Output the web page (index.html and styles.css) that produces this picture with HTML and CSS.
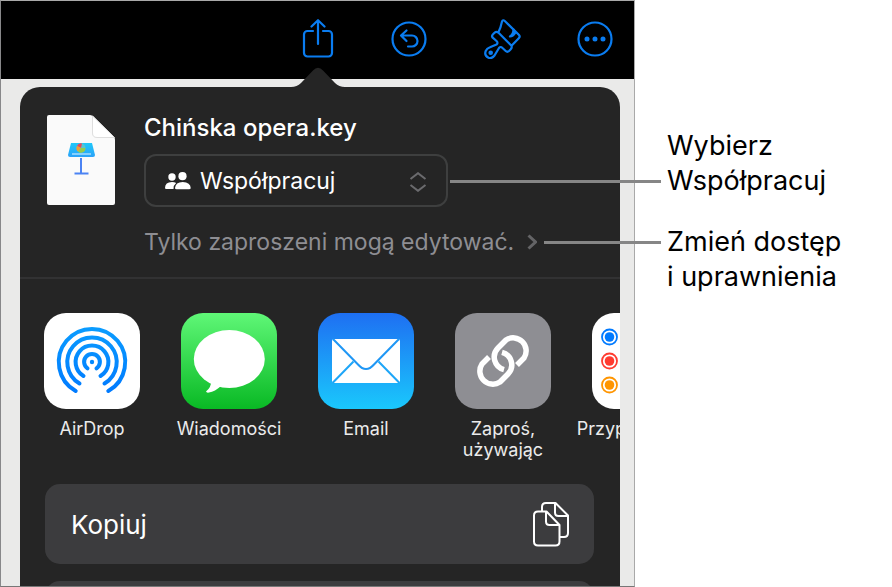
FILE: index.html
```html
<!DOCTYPE html>
<html lang="pl">
<head>
    <meta charset="UTF-8">
    <meta name="viewport" content="width=device-width, initial-scale=1.0">
    <title>Współpracuj</title>
    <link rel="stylesheet" href="styles.css">
</head>
<body>
    <div class="device">
        <!-- Pasek narzędzi -->
        <div class="toolbar">
            <button class="share" aria-label="Udostępnij">
                <svg width="36" height="40" viewBox="0 0 36 40">
                    <path d="M13 12H7.500a3.500 3.500 0 0 0-3.500 3.500V34a3.500 3.500 0 0 0 3.500 3.500H28.500a3.500 3.500 0 0 0 3.500-3.500V15.500a3.500 3.500 0 0 0-3.500-3.500H23M18 25V1.500M11.500 7.500L18 1.200L24.500 7.500"/>
                </svg>
            </button>
            <button aria-label="Cofnij">
                <svg width="40" height="40" viewBox="0 0 40 40">
                    <circle cx="20" cy="20" r="16.500"/>
                    <path d="M17.500 11.500L12 16.500L17.500 22M12.500 16.500H23a5.500 5.500 0 0 1 0 11H19"/>
                </svg>
            </button>
            <button aria-label="Format">
                <svg width="40" height="40" viewBox="0 0 40 40">
                    <path d="M20 2.500Q21 0.300 22.800 2L36.800 15.700Q38.500 17.500 36.800 19.300L29.500 26.800Q30.300 28.500 28.500 30.500L27 32Q25.300 33.500 23.700 32L20.500 29Q18.500 27 17 29L12.500 36.500Q10 40 6.500 38.800Q2 36.500 3.700 32Q4.800 29.500 8 28.300L14.500 25.500Q16.500 24 14.500 22L10.700 18.700Q9.300 17 10.800 15.500L12.500 13.800Q14.300 12 16.300 13.500Q18.700 9 20 2.500ZM16.300 13.500L29.500 26.800"/>
                    <path class="solid" d="M31.500 10.500Q31.500 15 28 17.500Q31 17.500 33.500 13.500Z"/>
                    <circle class="solid" cx="8.700" cy="33.800" r="1.200"/>
                </svg>
            </button>
            <button aria-label="Więcej">
                <svg width="40" height="40" viewBox="0 0 40 40">
                    <circle cx="20" cy="20" r="16.500"/>
                    <g class="solid">
                        <circle cx="12" cy="20" r="1.400"/>
                        <circle cx="20" cy="20" r="1.400"/>
                        <circle cx="28" cy="20" r="1.400"/>
                    </g>
                </svg>
            </button>
        </div>

        <!-- Arkusz udostępniania -->
        <div class="sheet">
            <svg class="arrow" width="54" height="21" viewBox="0 0 54 21">
                <path d="M0 21V20Q6 20 10 16L22 3.500Q27-2 32 3.500L44 16Q48 20 54 20V21Z"/>
            </svg>

            <div class="file">
                <svg class="thumb" width="68" height="90" viewBox="0 0 68 90">
                    <defs>
                        <linearGradient id="podium" x1="0" y1="0" x2="0" y2="1">
                            <stop offset="0" stop-color="#1fc8fa"/>
                            <stop offset="1" stop-color="#2ba2f8"/>
                        </linearGradient>
                    </defs>
                    <path d="M2 0H43Q45 0 46.500 1.500L67 22Q68 23 68 25V88Q68 90 66 90H2Q0 90 0 88V2Q0 0 2 0Z" fill="#fafafa"/>
                    <path d="M45.500 1V18Q45.500 22.500 50 22.500H67.500Z" fill="#fff" stroke="#dedede"/>
                    <path d="M24 28H45L48 40Q48 42 46 42H23Q21 42 21 40Z" fill="url(#podium)"/>
                    <path d="M25 39H44" stroke="#a5dcff" stroke-width="1.500"/>
                    <circle cx="34" cy="33" r="4.500" fill="#58c6cf"/>
                    <path d="M34 33L30 31A4.500 4.500 0 0 1 35 28.500Z" fill="#e8485c"/>
                    <path d="M34 33L31 36.500A4.500 4.500 0 0 1 30 31Z" fill="#f39b35"/>
                    <path d="M34 33H38.500A4.500 4.500 0 0 1 31 36.500Z" fill="#95cb4b"/>
                    <path d="M34 43V58M27.500 58.500H41.500" stroke="#4b83f3" stroke-width="2"/>
                </svg>
                <div class="details">
                    <h1>Chińska opera.key</h1>
                    <div class="mode">
                        <svg class="people" width="26" height="18" viewBox="0 0 26 18">
                            <circle cx="7" cy="5" r="3.700"/>
                            <circle cx="17.500" cy="4.200" r="4.100"/>
                            <path d="M0 16Q0 10 7 10Q9.500 10 11.200 11Q8.500 13 8.500 17H1.200Q0 17 0 16ZM10 16Q10.500 10 17.700 10Q25.500 10.300 25.700 16Q25.700 17.300 24 17.300H11.500Q10 17.300 10 16Z"/>
                        </svg>
                        <select aria-label="Sposób udostępniania">
                            <option>Współpracuj</option>
                            <option>Wyślij kopię</option>
                        </select>
                        <svg class="updown" width="18" height="20" viewBox="0 0 18 20">
                            <path d="M1.500 7L9 1.200L16.500 7M1.500 13L9 18.800L16.500 13"/>
                        </svg>
                    </div>
                    <a class="access" href="#">Tylko zaproszeni mogą edytować.
                        <svg width="10" height="16" viewBox="0 0 10 16"><path d="M1.500 1.500L8.500 8L1.500 14.500"/></svg>
                    </a>
                </div>
            </div>

            <div class="apps">
                <a class="app" href="#">
                    <svg width="96" height="96" viewBox="0 0 96 96">
                        <defs>
                            <linearGradient id="air" gradientUnits="userSpaceOnUse" x1="0" y1="14" x2="0" y2="80">
                                <stop offset="0" stop-color="#0a9cff"/>
                                <stop offset="1" stop-color="#007aff"/>
                            </linearGradient>
                        </defs>
                        <rect width="96" height="96" rx="22" fill="#fff"/>
                        <g fill="none" stroke="url(#air)" stroke-width="4" stroke-linecap="round">
                            <path d="M31.700 78A33.200 33.200 0 1 1 64.300 78"/>
                            <path d="M35.500 70.500A24.700 24.700 0 1 1 60.500 70.500"/>
                            <path d="M39.500 63A16.400 16.400 0 1 1 56.500 63"/>
                            <path d="M43.500 55.300A7.900 7.900 0 1 1 52.500 55.300"/>
                        </g>
                        <circle cx="48" cy="49" r="2.200" fill="#0089ff"/>
                    </svg>
                    <span>AirDrop</span>
                </a>
                <a class="app" href="#">
                    <svg width="96" height="96" viewBox="0 0 96 96">
                        <defs>
                            <linearGradient id="green" x1="0" y1="0" x2="0" y2="1">
                                <stop offset="0" stop-color="#5ff777"/>
                                <stop offset="1" stop-color="#09b924"/>
                            </linearGradient>
                        </defs>
                        <rect width="96" height="96" rx="22" fill="url(#green)"/>
                        <ellipse cx="48.300" cy="46" rx="35.500" ry="29" fill="#fff"/>
                        <path d="M30 68Q30.500 74 25 78.500Q25.500 80 28 79.500Q34 78.500 40 73Z" fill="#fff"/>
                    </svg>
                    <span>Wiadomości</span>
                </a>
                <a class="app" href="#">
                    <svg width="96" height="96" viewBox="0 0 96 96">
                        <defs>
                            <linearGradient id="blue" x1="0" y1="0" x2="0" y2="1">
                                <stop offset="0" stop-color="#1e6ff2"/>
                                <stop offset="1" stop-color="#1ac8fc"/>
                            </linearGradient>
                        </defs>
                        <rect width="96" height="96" rx="22" fill="url(#blue)"/>
                        <rect x="14" y="26" width="68" height="44" rx="2" fill="#fff"/>
                        <path d="M15 26L40 51.500Q48 60.500 56 51.500L81 26" fill="none" stroke="#1f97f5" stroke-width="2"/>
                        <path d="M14.500 70L35.500 48.500M81.500 70L60.500 48.500" stroke="#1ea6f8" stroke-width="2"/>
                    </svg>
                    <span>Email</span>
                </a>
                <a class="app" href="#">
                    <svg width="96" height="96" viewBox="0 0 96 96">
                        <rect width="96" height="96" rx="22" fill="#8e8e93"/>
                        <g fill="none" stroke="#fff" stroke-width="5.500">
                            <path d="M62 52L69 45A13 13 0 0 0 51 27L43 35A13 13 0 0 0 49 56.700"/>
                            <path d="M34 44L27 51A13 13 0 0 0 45 69L53 61A13 13 0 0 0 47 39.300"/>
                        </g>
                    </svg>
                    <span>Zaproś,<br>używając</span>
                </a>
                <a class="app" href="#">
                    <svg width="96" height="96" viewBox="0 0 96 96">
                        <rect width="96" height="96" rx="22" fill="#fff"/>
                        <g fill="none" stroke-width="1.800">
                            <circle cx="17.500" cy="24" r="7.500" stroke="#007aff"/>
                            <circle cx="17.500" cy="48" r="7.500" stroke="#ff3b30"/>
                            <circle cx="17.500" cy="72" r="7.500" stroke="#ff9500"/>
                        </g>
                        <circle cx="17.500" cy="24" r="4.800" fill="#007aff"/>
                        <circle cx="17.500" cy="48" r="4.800" fill="#ff3b30"/>
                        <circle cx="17.500" cy="72" r="4.800" fill="#ff9500"/>
                    </svg>
                    <span>Przypomnienia</span>
                </a>
            </div>

            <div class="actions">
                <button class="action">
                    Kopiuj
                    <svg width="38" height="46" viewBox="0 0 38 46">
                        <path d="M10 10V6Q10 2 14 2H23.500L36 14.500V32Q36 36 32 36H28M23 2V11.500Q23 15 26.500 15H36"/>
                        <path d="M6 10.500H14.500L27.500 24V40.500Q27.500 44.500 23.500 44.500H6Q2 44.500 2 40.500V14.500Q2 10.500 6 10.500ZM14 10.500V20.500Q14 24 17.500 24H27.500"/>
                    </svg>
                </button>
                <button class="action" aria-label="Więcej czynności"></button>
            </div>
        </div>
    </div>

    <!-- Objaśnienia -->
    <div class="notes">
        <p class="note note-mode">Wybierz<br>Współpracuj</p>
        <p class="note note-access">Zmień dostęp<br>i uprawnienia</p>
    </div>
</body>
</html>
```
FILE: styles.css
```css
* {
    box-sizing: border-box;
}

body {
    margin: 0;
    display: flex;
    height: 100vh;
    overflow: hidden;
    background-color: #fff;
    font-family: Inter, "Noto Sans", sans-serif;
}

button,
select {
    font-family: inherit;
    cursor: pointer;
}

a {
    text-decoration: none;
}

svg {
    display: block;
    flex-shrink: 0;
}

.device {
    flex: 1;
    min-width: 0;
    border: 1px solid #a9a9a9;
    border-left-color: #88888a;
    border-bottom-color: #777;
    background-color: #eaeae9;
    overflow: hidden;
}

/* Toolbar */
.toolbar {
    display: flex;
    justify-content: flex-end;
    gap: 53px;
    height: 78px;
    padding: 18px 19px 0 0;
    background-color: #000;
}

.toolbar button {
    width: 40px;
    height: 40px;
    padding: 0;
    border: none;
    background: none;
}

.toolbar .share {
    width: 36px;
}

.toolbar svg {
    fill: none;
    stroke: #0a7cf0;
    stroke-width: 2.2;
    stroke-linecap: round;
    stroke-linejoin: round;
}

.toolbar .solid {
    fill: #0a7cf0;
}

/* Sheet */
.sheet {
    position: relative;
    margin: 8px 14px 0 19px;
    border-radius: 20px 20px 0 0;
    background-color: #252525;
    color: #fff;
}

.arrow {
    position: absolute;
    right: 275px;
    bottom: 100%;
    margin-bottom: -1px;
    fill: #252525;
}

.file {
    display: flex;
    gap: 29px;
    padding: 28px 27px 21px;
    border-bottom: 2px solid #323233;
}

.details h1 {
    margin: 0 0 13px;
    font-size: 24px;
    line-height: 26px;
    font-weight: 500;
    white-space: nowrap;
}

.mode {
    position: relative;
    width: 304px;
}

.mode select {
    display: block;
    width: 100%;
    height: 53px;
    padding: 0 54px;
    border: 2px solid #3e3f3f;
    border-radius: 12px;
    background-color: transparent;
    color: #fff;
    font-size: 23px;
    appearance: none;
}

.people,
.updown {
    position: absolute;
    top: 18px;
    pointer-events: none;
}

.people {
    left: 21px;
    fill: #fff;
}

.updown {
    right: 21px;
    fill: none;
    stroke: #6b6b6e;
    stroke-width: 2;
}

.access {
    display: flex;
    align-items: center;
    gap: 13px;
    margin-top: 21px;
    color: #8e8e93;
    font-size: 23px;
    line-height: 28px;
    white-space: nowrap;
}

.access svg {
    fill: none;
    stroke: #646466;
    stroke-width: 3;
}

.apps {
    display: flex;
    gap: 17px;
    padding: 34px 0 0 12px;
    overflow: hidden;
}

.app {
    display: flex;
    flex: 0 0 120px;
    flex-direction: column;
    align-items: center;
    gap: 9px;
    min-width: 0;
    color: #ebebeb;
    font-size: 18px;
    line-height: 21px;
    text-align: center;
}

.actions {
    display: flex;
    flex-direction: column;
    gap: 17px;
    padding: 24px 26px 0 25px;
}

.action {
    display: flex;
    align-items: center;
    justify-content: space-between;
    height: 80px;
    padding: 0 24px 0 26px;
    border: none;
    border-radius: 15px;
    background-color: #3c3c3e;
    color: #fff;
    font-size: 26px;
}

.action svg {
    fill: none;
    stroke: #fff;
    stroke-width: 2;
    stroke-linejoin: round;
}

/* Notes */
.notes {
    flex: 0 0 257px;
    padding: 128px 0 0 32px;
}

.note {
    position: relative;
    margin: 0 0 26px;
    color: #000;
    font-size: 27px;
    line-height: 35px;
}

.note::before {
    content: "";
    position: absolute;
    right: 100%;
    margin-right: 6px;
    height: 3px;
    background-color: #868686;
}

.note-mode::before {
    top: 52px;
    width: 211px;
}

.note-access::before {
    top: 17px;
    width: 117px;
}
```
